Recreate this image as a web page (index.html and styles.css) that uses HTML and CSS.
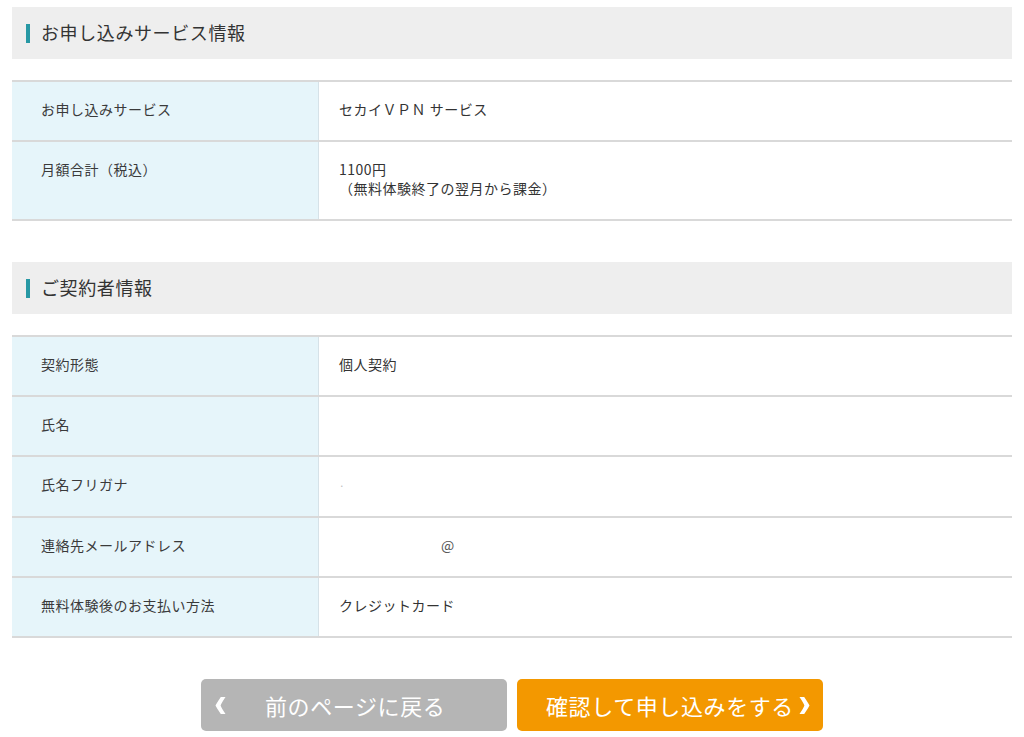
FILE: index.html
```html
<!DOCTYPE html>
<html lang="ja">
<head>
<meta charset="utf-8">
<title>お申し込み内容確認</title>
<link rel="stylesheet" href="styles.css">
</head>
<body>
<div class="page">
  <section class="section">
    <h2 class="sec-head"><span class="sec-bar"></span>お申し込みサービス情報</h2>
    <div class="table">
      <div class="row">
        <div class="label">お申し込みサービス</div>
        <div class="value">セカイＶＰＮ サービス</div>
      </div>
      <div class="row">
        <div class="label">月額合計（税込）</div>
        <div class="value">1100円<br>（無料体験終了の翌月から課金）</div>
      </div>
    </div>
  </section>

  <section class="section">
    <h2 class="sec-head"><span class="sec-bar"></span>ご契約者情報</h2>
    <div class="table">
      <div class="row">
        <div class="label">契約形態</div>
        <div class="value">個人契約</div>
      </div>
      <div class="row">
        <div class="label">氏名</div>
        <div class="value"></div>
      </div>
      <div class="row">
        <div class="label">氏名フリガナ</div>
        <div class="value"><span class="dot">·</span></div>
      </div>
      <div class="row">
        <div class="label">連絡先メールアドレス</div>
        <div class="value"><span class="at">@</span></div>
      </div>
      <div class="row">
        <div class="label">無料体験後のお支払い方法</div>
        <div class="value">クレジットカード</div>
      </div>
    </div>
  </section>

  <div class="actions">
    <button class="btn btn-back" type="button">
      <svg class="chev" width="11" height="17" viewBox="0 0 11 17" aria-hidden="true"><path d="M10.5 0 Q6.5 6 5.6 8.5 Q6.5 11 10.5 17 L5.8 17 Q1.8 11 0.5 8.5 Q1.8 6 5.8 0 Z" fill="#fff"/></svg>
      <span>前のページに戻る</span>
    </button>
    <button class="btn btn-next" type="button">
      <span>確認して申し込みをする</span>
      <svg class="chev" width="11" height="17" viewBox="0 0 11 17" aria-hidden="true"><path d="M0.5 0 Q4.5 6 5.4 8.5 Q4.5 11 0.5 17 L5.2 17 Q9.2 11 10.5 8.5 Q9.2 6 5.2 0 Z" fill="#fff"/></svg>
    </button>
  </div>
</div>
</body>
</html>
```

FILE: styles.css
```css
html, body {
  margin: 0;
  padding: 0;
  background: #ffffff;
}

body {
  font-family: "Noto Sans CJK JP", "Noto Sans", sans-serif;
  color: #333333;
}

.page {
  width: 1000px;
  padding: 7px 12px 0;
}

.section {
  margin-bottom: 41px;
}

.sec-head {
  display: flex;
  align-items: center;
  box-sizing: border-box;
  height: 52px;
  margin: 0 0 21px;
  padding: 0 0 3px 14px;
  background: #eeeeee;
  font-size: 18px;
  font-weight: normal;
  color: #333333;
  letter-spacing: 0.6px;
}

.sec-bar {
  width: 4px;
  height: 19px;
  margin: 3px 11px 0 0;
  background: #2798a4;
}

.table {
  border-top: 2px solid #d9d9d9;
}

.row {
  display: grid;
  grid-template-columns: 307px 1fr;
  border-bottom: 2px solid #d9d9d9;
  font-size: 14px;
  line-height: 19px;
  letter-spacing: 0.5px;
}

.label {
  background: #e6f5fa;
  padding: 18px 20px 21px 29px;
  border-right: 1px solid #d6e2e8;
  color: #3a3a3a;
}

.value {
  padding: 18px 20px 21px 20px;
  min-height: 19px;
}

.dot {
  color: #bbbbbb;
  font-size: 10px;
}

.at {
  margin-left: 102px;
  color: #555555;
}

.actions {
  display: flex;
  justify-content: center;
  gap: 10px;
}

.btn {
  display: flex;
  align-items: center;
  box-sizing: border-box;
  width: 306px;
  height: 52px;
  border: none;
  border-radius: 5px;
  color: #ffffff;
  font-family: "Noto Sans CJK JP", "Noto Sans", sans-serif;
  font-size: 22px;
  letter-spacing: 0.6px;
  cursor: pointer;
  padding-bottom: 2px;
}

.btn-back {
  background: #b5b5b5;
  padding-left: 14px;
}

.btn-back .chev {
  margin: 2px 39px 0 0;
}

.btn-next {
  background: #f39800;
  padding-left: 29px;
}

.btn-next .chev {
  margin: 2px 0 0 5px;
}
```
